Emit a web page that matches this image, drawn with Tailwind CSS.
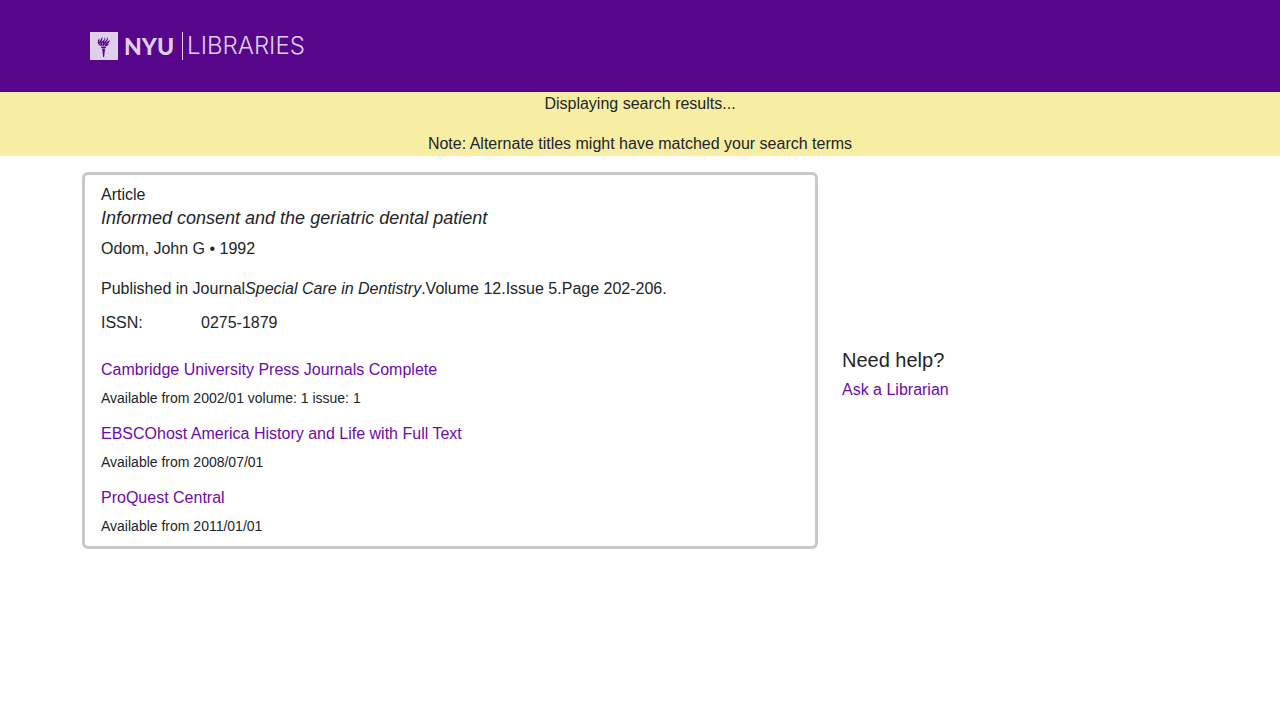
<!DOCTYPE html>
<html lang="en">
<head>
<meta charset="utf-8">
<meta name="viewport" content="width=device-width, initial-scale=1">
<title>NYU Libraries</title>
<script src="https://cdn.jsdelivr.net/npm/@tailwindcss/browser@4"></script>
</head>
<body class="bg-white font-['Liberation_Sans',Arial,sans-serif] text-base text-[#212529]">
<header class="bg-[#57068c]">
  <div class="mx-auto flex h-[92px] max-w-[1140px] items-center px-5">
    <a href="#" aria-label="NYU Libraries" class="flex h-7 items-center text-[#dfcfea]">
      <svg class="size-7" viewBox="0 0 28 28" aria-hidden="true">
        <path fill="currentColor" d="M0 0h28v28H0z"/>
        <g fill="#57068c">
          <path d="M11 14.800h5.200l-.5 1.500h-4.200zM12.200 16.800h2.800L14.100 25h-1z"/>
          <path d="M11.500 14.300C9 13.600 7.400 11.600 7.800 9.200 8 8 8.800 7.300 9 6.300c.8 1.400.2 2.500.5 3.700.5-2.500 2.700-3.100 2.500-5.200 1.300 1.900-.4 3.600-.5 5.200 1.900-1.600 3.800-2.700 3.200-5.200 1.700 2-.3 3.800-.8 5.200 2.200-1.300 3.700-2.700 3.500-5 1.500 2.100-.3 4-1.500 5.400 1.500-.5 3-1.500 3.800-2.900.3 2.500-1.400 3.900-3.100 4.700.9.100 1.800-.2 2.500-.7-.6 1.800-1.900 2.600-3.500 2.800z"/>
        </g>
        <path d="M9.800 10.500c.1 1.500 1 2.800 2.300 3.500M12.600 10.200c-.4 1.400-.2 2.700.5 3.800M15.800 10.800c-.9.800-1.400 1.900-1.500 3.200" fill="none" stroke="currentColor" stroke-width=".5"/>
      </svg>
      <span class="ml-1.5 font-['Lato',sans-serif] text-[23px] leading-7 font-black">NYU</span>
      <span class="ml-2 h-7 w-px bg-current"></span>
      <span class="ml-1 font-['Inter',sans-serif] text-2xl leading-7 font-light">LIBRARIES</span>
    </a>
  </div>
</header>
<div class="bg-[#f7eda3] text-center leading-6" role="status">
  <p class="mb-4">Displaying search results...</p>
  <p>Note: Alternate titles might have matched your search terms</p>
</div>
<main class="mx-auto mt-4 grid max-w-[1140px] grid-cols-3 items-center gap-6 px-3">
  <section class="col-span-2 rounded-md border-3 border-[#c8c8c8] px-4 py-2">
    <p class="leading-6">Article</p>
    <h1 class="mb-2 text-lg leading-[22px] italic">Informed consent and the geriatric dental patient</h1>
    <p class="mb-4 leading-6">Odom, John G • 1992</p>
    <p class="mb-2.5 leading-6">Published in Journal<i>Special Care in Dentistry</i>.Volume 12.Issue 5.Page 202-206.</p>
    <dl class="mb-[23px] flex leading-6"><dt class="w-25">ISSN:</dt><dd>0275-1879</dd></dl>
    <ul class="flex flex-col gap-3">
      <li><a href="#" class="block w-fit leading-6 text-[#6d09ae]">Cambridge University Press Journals Complete</a><p class="mt-1 text-sm leading-6">Available from 2002/01 volume: 1 issue: 1</p></li>
      <li><a href="#" class="block w-fit leading-6 text-[#6d09ae]">EBSCOhost America History and Life with Full Text</a><p class="mt-1 text-sm leading-6">Available from 2008/07/01</p></li>
      <li><a href="#" class="block w-fit leading-6 text-[#6d09ae]">ProQuest Central</a><p class="mt-1 text-sm leading-6">Available from 2011/01/01</p></li>
    </ul>
  </section>
  <aside class="pt-7">
    <h2 class="mb-1.5 text-xl leading-6">Need help?</h2>
    <a href="#" class="block w-fit leading-6 text-[#6d09ae]">Ask a Librarian</a>
  </aside>
</main>
</body>
</html>
